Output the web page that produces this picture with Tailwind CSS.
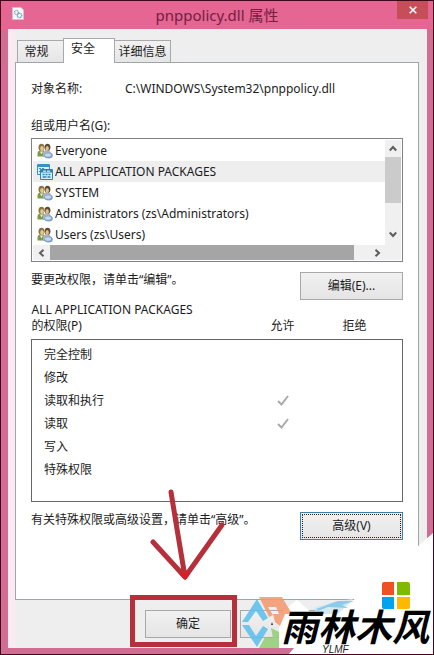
<!DOCTYPE html>
<html lang="zh-CN">
<head>
<meta charset="utf-8">
<title>pnppolicy.dll 属性</title>
<script src="https://cdn.jsdelivr.net/npm/@tailwindcss/browser@4"></script>
</head>
<body class="bg-white font-['Noto_Sans','Noto_Sans_CJK_SC',sans-serif] text-xs text-[#1c1c1c]">
<svg class="hidden" aria-hidden="true">
  <symbol id="users" viewBox="0 0 16 16">
    <path d="M0.500 13.500V10q0-2 2.500-2.500h3.500q2 .5 2 2.500v3.500z" fill="#7c9a45"/>
    <path d="M6 14V9.500Q6.500 7.500 9 7.500h2.500q2.500.5 2.500 3V14z" fill="#a8b5c0"/>
    <ellipse cx="4.500" cy="4.500" rx="3" ry="3.700" fill="#8a7440"/>
    <ellipse cx="5" cy="5.500" rx="1.800" ry="2.500" fill="#e2c793"/>
    <ellipse cx="10.500" cy="4.300" rx="2.900" ry="3.600" fill="#5d4932"/>
    <ellipse cx="10.200" cy="5.400" rx="1.700" ry="2.500" fill="#e0bd92"/>
    <path d="M3 8.500l1.500 3 1.500-3z" fill="#eef0dc"/>
    <ellipse cx="11.500" cy="12.500" rx="4.300" ry="3" fill="#7e9fca"/>
    <ellipse cx="11" cy="12" rx="3.200" ry="1.800" fill="#c3d6ee"/>
  </symbol>
  <symbol id="packages" viewBox="0 0 16 16">
    <path d="M.5.5h12v10H.5z" fill="#d8edf6" stroke="#3793bd"/>
    <path d="M1 1h11v2H1z" fill="#3793bd"/>
    <path d="M2 4.500h2m1 0h2m-5 3h2" stroke="#3793bd"/>
    <path d="M3.500 5.500h12v10h-12z" fill="#d8edf6" stroke="#2787b4"/>
    <path d="M4 6h11v2.500H4z" fill="#2787b4"/>
    <path d="M6 7.200h3m1 0h3" stroke="#fff"/>
    <path d="M5.500 10.500h2m1 0h2m1 0h2m-8 2.500h4m1 0h3" stroke="#2787b4" stroke-width="1.500"/>
  </symbol>
  <symbol id="tick" viewBox="0 0 12 12">
    <path d="M1 6L4.500 9.500L11 1" fill="none" stroke="#a9a9a9" stroke-width="2"/>
  </symbol>
</svg>

<main class="relative flex min-h-screen flex-col overflow-hidden border border-[#43041c] bg-[#d16c92] pr-[6px] pb-[6px] pl-[7px]">
  <header class="relative -mr-[6px] -ml-[7px] flex h-7 items-center justify-center bg-[#e56593]">
    <svg class="absolute top-[6px] left-[11px] h-[13px] w-3" viewBox="0 0 12 13">
      <path d="M.5.5h8.500l2.500 2.500v9.500H.5z" fill="#f7f8fa" stroke="#d9bccb"/>
      <circle cx="4.500" cy="5.500" r="2" fill="none" stroke="#7f9fb8" stroke-width="1.300" stroke-dasharray="1 .5"/>
      <circle cx="7.500" cy="8.500" r="2.200" fill="none" stroke="#6f92b0" stroke-width="1.300" stroke-dasharray="1 .5"/>
    </svg>
    <h1 class="text-[15px] leading-5 text-[#74203f]">pnppolicy.dll 属性</h1>
    <button aria-label="关闭" class="absolute top-0 right-[5px] flex h-[18px] w-[31px] items-center justify-center bg-[#c54e58]">
      <svg class="h-2 w-2" viewBox="0 0 8 8"><path d="M.7.700l6.600 6.600M7.300.700L.7 7.300" stroke="#fff" stroke-width="1.600"/></svg>
    </button>
  </header>

  <div class="flex flex-1 flex-col border-l-[7px] border-[#fbeaf1] bg-[#eee] pr-2">
    <div role="tablist" class="flex items-end pt-[9px] pl-[2px]">
      <button role="tab" class="h-[22px] w-[46px] border border-r-0 border-b-0 border-[#a9a9a9] bg-linear-to-b from-[#f1f1f1] to-[#e6e6e6] pr-2 leading-5">常规</button>
      <button role="tab" aria-selected="true" class="relative -mb-px h-[25px] w-[52px] border border-b-0 border-[#a4aaad] bg-white pr-3 pb-1 leading-5">安全</button>
      <button role="tab" class="h-[22px] w-[56px] border border-b-0 border-l-0 border-[#a9a9a9] bg-linear-to-b from-[#f1f1f1] to-[#e6e6e6] leading-5">详细信息</button>
    </div>

    <section class="flex-1 border border-[#9ba7ab] bg-white px-[15px] pt-4">
      <div class="flex leading-5">
        <span class="w-[94px]">对象名称:</span>
        <span>C:\WINDOWS\System32\pnppolicy.dll</span>
      </div>

      <h2 id="groups" class="mt-[15px] leading-6">组或用户名(G):</h2>
      <div class="border border-[#7f8388] p-px">
        <div class="flex">
          <ul role="listbox" aria-labelledby="groups" class="flex-1 leading-[21px]">
            <li role="option" class="flex items-center gap-[2px] pl-1"><svg class="size-4"><use href="#users"/></svg>Everyone</li>
            <li role="option" aria-selected="true" class="flex items-center gap-[2px] bg-[#eee] pl-1"><svg class="size-4"><use href="#packages"/></svg>ALL APPLICATION PACKAGES</li>
            <li role="option" class="flex items-center gap-[2px] pl-1"><svg class="size-4"><use href="#users"/></svg>SYSTEM</li>
            <li role="option" class="flex items-center gap-[2px] pl-1"><svg class="size-4"><use href="#users"/></svg>Administrators (zs\Administrators)</li>
            <li role="option" class="flex items-center gap-[2px] pl-1"><svg class="size-4"><use href="#users"/></svg>Users (zs\Users)</li>
          </ul>
          <div class="flex w-4 flex-col items-center bg-[#f0f0f0]">
            <svg class="my-[5px] h-[7px] w-2" viewBox="0 0 8 7"><path d="M.8 5.500L4 2l3.200 3.500" fill="none" stroke="#5d5d5d" stroke-width="2"/></svg>
            <div class="h-[46px] w-full bg-[#cbcbcb]"></div>
            <svg class="mt-auto mb-[7px] h-[7px] w-2" viewBox="0 0 8 7"><path d="M.8 1.500L4 5l3.200-3.500" fill="none" stroke="#5d5d5d" stroke-width="2"/></svg>
          </div>
        </div>
        <div class="flex h-[15px] items-center bg-[#f0f0f0]">
          <svg class="mx-[5px] h-2 w-[7px]" viewBox="0 0 7 8"><path d="M5.500.800L2 4l3.500 3.200" fill="none" stroke="#5d5d5d" stroke-width="2"/></svg>
          <div class="h-full flex-1 bg-[#a5a5a5]"></div>
          <svg class="mr-5 ml-5 h-2 w-[7px]" viewBox="0 0 7 8"><path d="M1.500.800L5 4 1.500 7.200" fill="none" stroke="#5d5d5d" stroke-width="2"/></svg>
        </div>
      </div>

      <div class="mt-[10px] flex items-start justify-between">
        <p class="leading-4">要更改权限，请单击“编辑”。</p>
        <button class="h-7 w-[103px] border border-[#a8a8a8] bg-linear-to-b from-[#f1f1f1] to-[#e5e5e5]">编辑(E)...</button>
      </div>

      <table class="mt-[2px] w-full table-fixed border-collapse">
        <colgroup><col><col class="w-[72px]"><col class="w-[84px]"></colgroup>
        <thead class="align-bottom leading-4">
          <tr>
            <th class="pb-[5px] text-left font-normal">ALL APPLICATION PACKAGES<br>的权限(P)</th>
            <th class="pb-[5px] font-normal">允许</th>
            <th class="pr-3 pb-[5px] font-normal">拒绝</th>
          </tr>
        </thead>
        <tbody class="border border-[#63666a] leading-[23px]">
          <tr><td class="pt-[3px] pl-3">完全控制</td><td></td><td></td></tr>
          <tr><td class="pl-3">修改</td><td></td><td></td></tr>
          <tr><td class="pl-3">读取和执行</td><td><svg class="mx-auto size-3" role="img" aria-label="允许"><use href="#tick"/></svg></td><td></td></tr>
          <tr><td class="pl-3">读取</td><td><svg class="mx-auto size-3" role="img" aria-label="允许"><use href="#tick"/></svg></td><td></td></tr>
          <tr><td class="pl-3">写入</td><td></td><td></td></tr>
          <tr><td class="pb-5 pl-3">特殊权限</td><td></td><td></td></tr>
        </tbody>
      </table>

      <div class="mt-[10px] flex items-start justify-between">
        <p class="leading-4">有关特殊权限或高级设置，请单击“高级”。</p>
        <button class="h-7 w-[103px] border border-[#3f80a8] bg-linear-to-b from-[#f1f1f1] to-[#e5e5e5] p-px"><span class="flex h-full items-center justify-center border border-dotted border-[#222]">高级(V)</span></button>
      </div>
    </section>

    <footer class="flex gap-[9px] pt-[10px] pb-[10px] pl-[130px]">
      <div class="relative">
        <button class="block h-7 w-[86px] border border-[#a8a8a8] bg-linear-to-b from-[#f1f1f1] to-[#e5e5e5]">确定</button>
        <svg class="pointer-events-none absolute -bottom-[9px] -left-[15px] h-[158px] w-[107px] max-w-none" viewBox="0 0 107 158" fill="none" stroke="#b5303a" stroke-width="5">
          <path d="M2.500 108.500h102v47h-102z"/>
          <path d="M41 3L47 40L55 88M23 53L55 88L92 36" stroke-linecap="round" stroke-linejoin="round"/>
          <path d="M51 84l4 4 3-4" stroke="#e01b24" stroke-width="4"/>
        </svg>
      </div>
      <button aria-label="取消" class="h-7 w-[86px] border border-[#a8a8a8] bg-linear-to-b from-[#f1f1f1] to-[#e5e5e5]"></button>
    </footer>
  </div>

  <svg class="pointer-events-none absolute -right-px -bottom-px h-[125px] w-[200px]" viewBox="0 0 200 125" role="img" aria-label="雨林木风 YLMF">
    <path d="M200 2L183 17L121 69L104 84H45V118H60L54 125H200z" fill="#fff"/>
    <path d="M45 84l18-14 16 14zM104 84l17-15h5v16z" fill="#fff"/>
    <path d="M79 78l20-6 20-3-15 15H85z" fill="#d3e9f3"/>
    <path d="M82 79l22-8h16l-12 4 6 3-20-1-10 4z" fill="#8ecbe8"/>
    <g opacity=".88">
      <path d="M23 69L34 88L29 91L22 81L14 92H8z" fill="#5fc0ec"/>
      <path d="M8 95h7l7 11 7-10 5 3-11 18z" fill="#5fc0ec"/>
      <path d="M25 67h23l10 17H45l-3-7H34l5 8-4 2z" fill="#f39a72"/>
      <path d="M39 84h12l-5 12-5-4z" fill="#f39a72"/>
      <path d="M37 98l8 4v16H25l6-11 8 1z" fill="#96cf78"/>
    </g>
    <path d="M37 95l1-3 1 3z" fill="#333"/>
    <g>
      <path d="M150 47h10v13h-12V49q0-2 2-2z" fill="#ef5125" transform="translate(0 5)"/>
      <path d="M163 52h11q2 0 2 2v11h-13z" fill="#7fb900"/>
      <path d="M148 67h12v12h-10q-2 0-2-2z" fill="#00a3ee"/>
      <path d="M163 67h13v10q0 2-2 2h-11z" fill="#ffb900"/>
    </g>
    <text x="47" y="111" font-family="'Noto Sans CJK SC',sans-serif" font-size="37" font-weight="700" font-style="italic" fill="#000">雨林木风</text>
    <text x="88" y="123" font-family="'Liberation Sans',sans-serif" font-size="10" font-style="italic" fill="#222">YLMF</text>
  </svg>
</main>
</body>
</html>
